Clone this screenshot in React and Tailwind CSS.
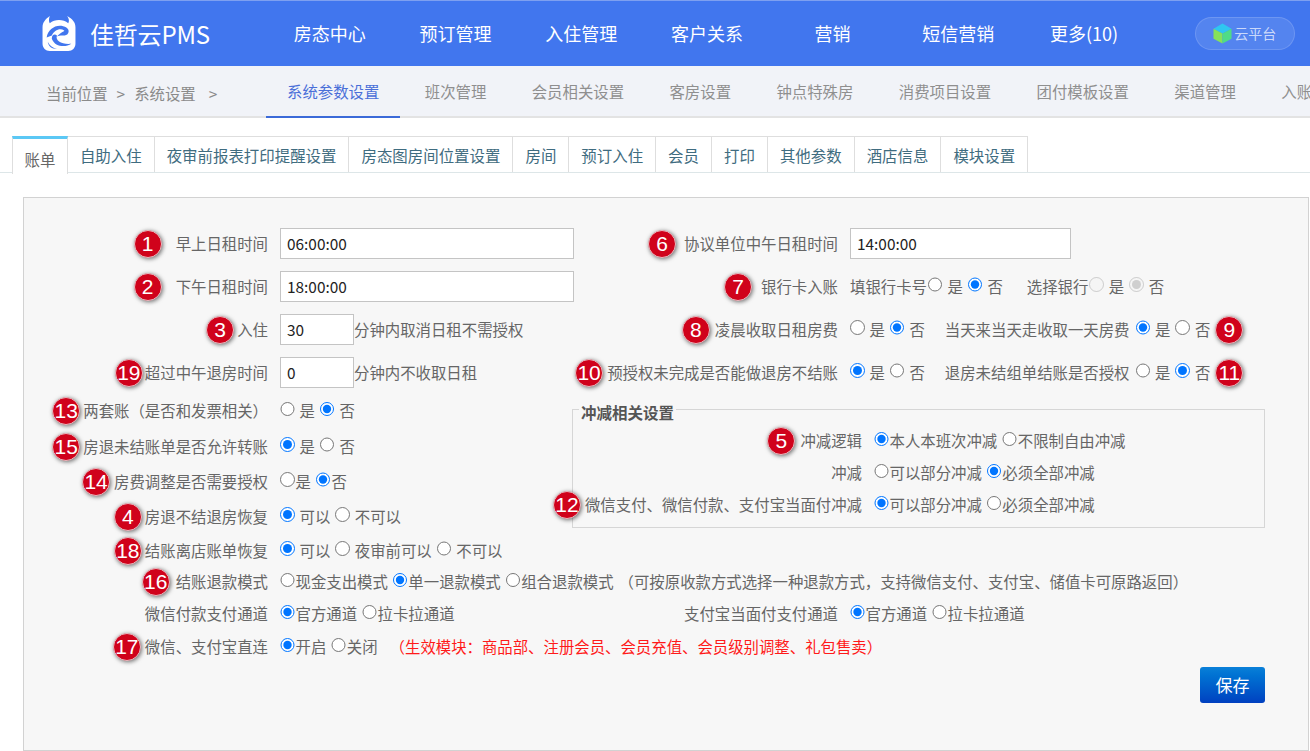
import { useId } from "react";

const NAV = ["房态中心", "预订管理", "入住管理", "客户关系", "营销", "短信营销", "更多(10)"];
const SUB_TABS = ["系统参数设置", "班次管理", "会员相关设置", "客房设置", "钟点特殊房", "消费项目设置", "团付模板设置", "渠道管理", "入账"];
const PAGE_TABS = ["账单", "自助入住", "夜审前报表打印提醒设置", "房态图房间位置设置", "房间", "预订入住", "会员", "打印", "其他参数", "酒店信息", "模块设置"];

function Logo() {
  return (
    <svg viewBox="0 0 32 35" className="w-[34px] h-[36px] shrink-0">
      <path d="M7 0 C3 3 0 6 0 11 V27 C0 31 3 34 7 34 H25 C29 34 32 31 32 27 V11 C32 6 29 3 24 0 C26 3 26 5 25 7 C20 3 12 3 7 7 C6 5 6 3 7 0 Z" fill="#fff" />
      <path d="M4 21 C5 13 13 8 20 10 C25 11 27 15 24 18 C21 20 17 18 14 20 C18 15 22 15 21 14 C17 11 11 14 9 19 Z" fill="#4176ee" />
      <path d="M9 22 C9 18 12 17 14 19 C12 24 19 28 28 27 C22 31 12 30 9 22 Z" fill="#4176ee" />
      <path d="M5 25 C7 29 10 31 14 32 C9 32 6 30 5 25 Z" fill="#4176ee" />
    </svg>
  );
}

function Cube() {
  return (
    <svg viewBox="0 0 20 22" className="w-[19px] h-[21px] shrink-0">
      <path d="M10 0.5 L19.5 6 L10 11 L0.5 6 Z" fill="#2fc6f0" />
      <path d="M0.5 6 L10 11 V21.5 L0.5 16.5 Z" fill="#86e25a" />
      <path d="M19.5 6 L10 11 V21.5 L19.5 16.5 Z" fill="#4fdc86" />
    </svg>
  );
}

function Badge({ n, className = "" }) {
  return (
    <span className={`inline-flex items-center justify-center w-[28px] h-[28px] shrink-0 rounded-full bg-[#d0021b] border border-[#e9b9bf] text-white text-[21px] font-['Liberation_Sans',sans-serif] shadow-[1px_1px_4px_rgba(0,0,0,0.55)] ${className}`}>
      {n}
    </span>
  );
}

function Radio({ name, checked, disabled, label, spaced = false }) {
  return (
    <label className="flex items-center">
      <input
        type="radio"
        name={name}
        defaultChecked={checked}
        disabled={disabled}
        className={`w-[14.5px] h-[14.5px] m-0 mb-[4px] shrink-0 ${spaced ? "mr-[5px]" : "mr-[1px]"}`}
      />
      <span>{label}</span>
    </label>
  );
}

// options is [label, checked], one radio group
function Radios({ options, spaced = false, disabled = false }) {
  const name = useId();
  return (
    <div className="flex items-center gap-[5px]">
      {options.map(([label, checked]) => (
        <Radio key={label} name={name} label={label} checked={checked} disabled={disabled} spaced={spaced} />
      ))}
    </div>
  );
}

function YesNo({ yes }) {
  return <Radios spaced options={[["是", yes], ["否", !yes]]} />;
}

function Label({ n, mr = "mr-[2px]", width = "w-[244px]", children }) {
  return (
    <div className={`${width} shrink-0 flex items-center justify-end whitespace-nowrap`}>
      {n && <Badge n={n} className={mr} />}
      <span>{children}</span>
    </div>
  );
}

function Row({ n, mr, label, width, height = "h-[43px]", children }) {
  return (
    <div className={`flex items-center gap-3 ${height}`}>
      <Label n={n} mr={mr} width={width}>{label}</Label>
      {children}
    </div>
  );
}

function TextInput({ value, width }) {
  return (
    <input
      defaultValue={value}
      className={`${width} shrink-0 h-[31px] px-[6px] pb-[2px] bg-white border border-[#c4c4c4] text-[#222] outline-none`}
    />
  );
}

export default function App() {
  return (
    <div className="w-[1310px] h-[751px] overflow-hidden bg-white text-[15.4px] text-[#666] font-['Noto_Sans_CJK_SC','Noto_Sans',sans-serif]">
      <header className="h-[66px] flex items-center bg-[#4176ee] border-t border-[#7ea0f0]">
        <div className="w-[267px] shrink-0 flex items-center pl-[42px] gap-[14px]">
          <Logo />
          <span className="text-[24px] text-white whitespace-nowrap tracking-[-0.2px]">佳哲云PMS</span>
        </div>
        <nav className="flex">
          {NAV.map((item) => (
            <a key={item} className="w-[125.7px] text-center text-[18px] text-white whitespace-nowrap">{item}</a>
          ))}
        </nav>
        <button className="ml-[48px] w-[100px] h-[33px] flex items-center justify-center gap-[2px] rounded-full bg-white/10 border border-white/15 text-[14px] text-white/70">
          <Cube />
          云平台
        </button>
      </header>

      <div className="h-[52px] flex bg-[#f1f3f8] border-b-2 border-[#e3e3e3] whitespace-nowrap">
        <div className="w-[266px] shrink-0 pl-[46px] pt-[16px] flex text-[#8a8a8a]">
          <span>当前位置</span>
          <span className="ml-[9px]">&gt;</span>
          <span className="ml-[9px]">系统设置</span>
          <span className="ml-[13px]">&gt;</span>
        </div>
        <div className="flex gap-[3.4px]">
          {SUB_TABS.map((tab, i) => (
            <a
              key={tab}
              className={`px-[21px] h-[52px] pt-[14px] shrink-0 ${i === 0 ? "text-[#4a6fd8] border-b-2 border-[#3b6ad8]" : "text-[#8f8f8f]"}`}
            >
              {tab}
            </a>
          ))}
        </div>
      </div>

      <div className="flex h-[37px] mt-[18px] pl-3 border-b border-[#dde6e8] text-[15.45px]">
        {PAGE_TABS.map((tab, i) => (
          <a
            key={tab}
            className={`whitespace-nowrap border-r border-[#dedede] ${i === 0 ? "px-[11.5px] pt-[9px] border-l border-t-[3px] border-t-[#5bc8f5] text-[#666] bg-white h-[38px]" : "px-3 pt-[7px] border-t text-[#3f6c80]"}`}
          >
            {tab}
          </a>
        ))}
      </div>

      <div className="w-[1286px] h-[554px] ml-[23px] mt-[24px] pt-[24px] bg-[#f7f7f7] border border-[#d2d2d2]">
        <div className="flex">
          <div className="w-[546px] shrink-0">
            <Row n={1} mr="mr-[14px]" label="早上日租时间"><TextInput value="06:00:00" width="w-[294px]" /></Row>
            <Row n={2} mr="mr-[14px]" label="下午日租时间"><TextInput value="18:00:00" width="w-[294px]" /></Row>
            <Row n={3} mr="mr-[3px]" label="入住">
              <div className="flex items-center whitespace-nowrap">
                <TextInput value="30" width="w-[74px]" />
                分钟内取消日租不需授权
              </div>
            </Row>
            <Row n={19} mr="mr-[2px]" label="超过中午退房时间">
              <div className="flex items-center whitespace-nowrap">
                <TextInput value="0" width="w-[74px]" />
                分钟内不收取日租
              </div>
            </Row>
          </div>
          <div className="flex-1">
            <Row n={6} mr="mr-[8px]" width="w-[268px]" label="协议单位中午日租时间"><TextInput value="14:00:00" width="w-[221px]" /></Row>
            <Row n={7} mr="mr-[9px]" width="w-[268px]" label="银行卡入账">
              <div className="flex items-center whitespace-nowrap">
                <span>填银行卡号</span>
                <div className="ml-[1px]"><YesNo yes={false} /></div>
                <span className="ml-[24px]">选择银行</span>
                <div className="ml-[1px]"><Radios spaced disabled options={[["是", false], ["否", true]]} /></div>
              </div>
            </Row>
            <Row n={8} mr="mr-[5px]" width="w-[268px]" label="凌晨收取日租房费">
              <YesNo yes={false} />
              <span className="ml-[8px] whitespace-nowrap">当天来当天走收取一天房费</span>
              <div className="-ml-[6px] flex items-center gap-[5px]">
                <YesNo yes={true} />
                <Badge n={9} />
              </div>
            </Row>
            <Row n={10} mr="mr-[4px]" width="w-[268px]" label="预授权未完成是否能做退房不结账">
              <YesNo yes={true} />
              <span className="ml-[8px] whitespace-nowrap">退房未结组单结账是否授权</span>
              <div className="-ml-[6px] flex items-center gap-[5px]">
                <YesNo yes={false} />
                <Badge n={11} />
              </div>
            </Row>
          </div>
        </div>

        <div className="flex">
          <div className="w-[546px] shrink-0">
            <Row n={13} mr="mr-[3px]" height="h-[34px]" label="两套账（是否和发票相关）"><YesNo yes={false} /></Row>
            <Row n={15} mr="mr-[3px]" height="h-[37px]" label="房退未结账单是否允许转账"><YesNo yes={true} /></Row>
            <Row n={14} mr="mr-[4px]" height="h-[33px]" label="房费调整是否需要授权"><Radios options={[["是", false], ["否", true]]} /></Row>
            <Row n={4} mr="mr-[3px]" height="h-[37px]" label="房退不结退房恢复"><Radios spaced options={[["可以", true], ["不可以", false]]} /></Row>
            <Row n={18} mr="mr-[3px]" height="h-[31px]" label="结账离店账单恢复"><Radios spaced options={[["可以", true], ["夜审前可以", false], ["不可以", false]]} /></Row>
          </div>
          <fieldset className="w-[693px] h-[131px] ml-[2px] mt-[3px] pt-[4px] border border-[#d6d6d6]">
            <legend className="ml-[6px] px-[2px] pt-[6px] font-bold text-[15.5px] leading-[18px] text-[#555]">冲减相关设置</legend>
            <Row n={5} mr="mr-[5px]" width="w-[289px]" height="h-[32px]" label="冲减逻辑"><Radios options={[["本人本班次冲减", true], ["不限制自由冲减", false]]} /></Row>
            <Row width="w-[289px]" height="h-[32px]" label="冲减"><Radios options={[["可以部分冲减", false], ["必须全部冲减", true]]} /></Row>
            <Row n={12} mr="mr-[4px]" width="w-[289px]" height="h-[32px]" label="微信支付、微信付款、支付宝当面付冲减"><Radios options={[["可以部分冲减", true], ["必须全部冲减", false]]} /></Row>
          </fieldset>
        </div>

        <Row n={16} mr="mr-[6px]" height="h-[32px]" label="结账退款模式">
          <div className="flex items-center whitespace-nowrap">
            <Radios options={[["现金支出模式", false], ["单一退款模式", true], ["组合退款模式", false]]} />
            <span className="ml-[5px]">（可按原收款方式选择一种退款方式，支持微信支付、支付宝、储值卡可原路返回）</span>
          </div>
        </Row>
        <div className="flex h-[32px]">
          <div className="w-[546px] shrink-0">
            <Row height="h-[32px]" label="微信付款支付通道"><Radios options={[["官方通道", true], ["拉卡拉通道", false]]} /></Row>
          </div>
          <Row width="w-[268px]" height="h-[32px]" label="支付宝当面付支付通道"><Radios options={[["官方通道", true], ["拉卡拉通道", false]]} /></Row>
        </div>
        <Row n={17} mr="mr-[4px]" height="h-[34px]" label="微信、支付宝直连">
          <div className="flex items-center whitespace-nowrap">
            <Radios options={[["开启", true], ["关闭", false]]} />
            <span className="ml-[12px] text-[#ff1a1a]">（生效模块：商品部、注册会员、会员充值、会员级别调整、礼包售卖）</span>
          </div>
        </Row>

        <div className="w-[1241px] flex justify-end mt-[3px]">
          <button className="w-[65px] h-[36px] rounded-[3px] bg-gradient-to-b from-[#0a80d8] to-[#0240c0] text-white text-[17px]">保存</button>
        </div>
      </div>
    </div>
  );
}
